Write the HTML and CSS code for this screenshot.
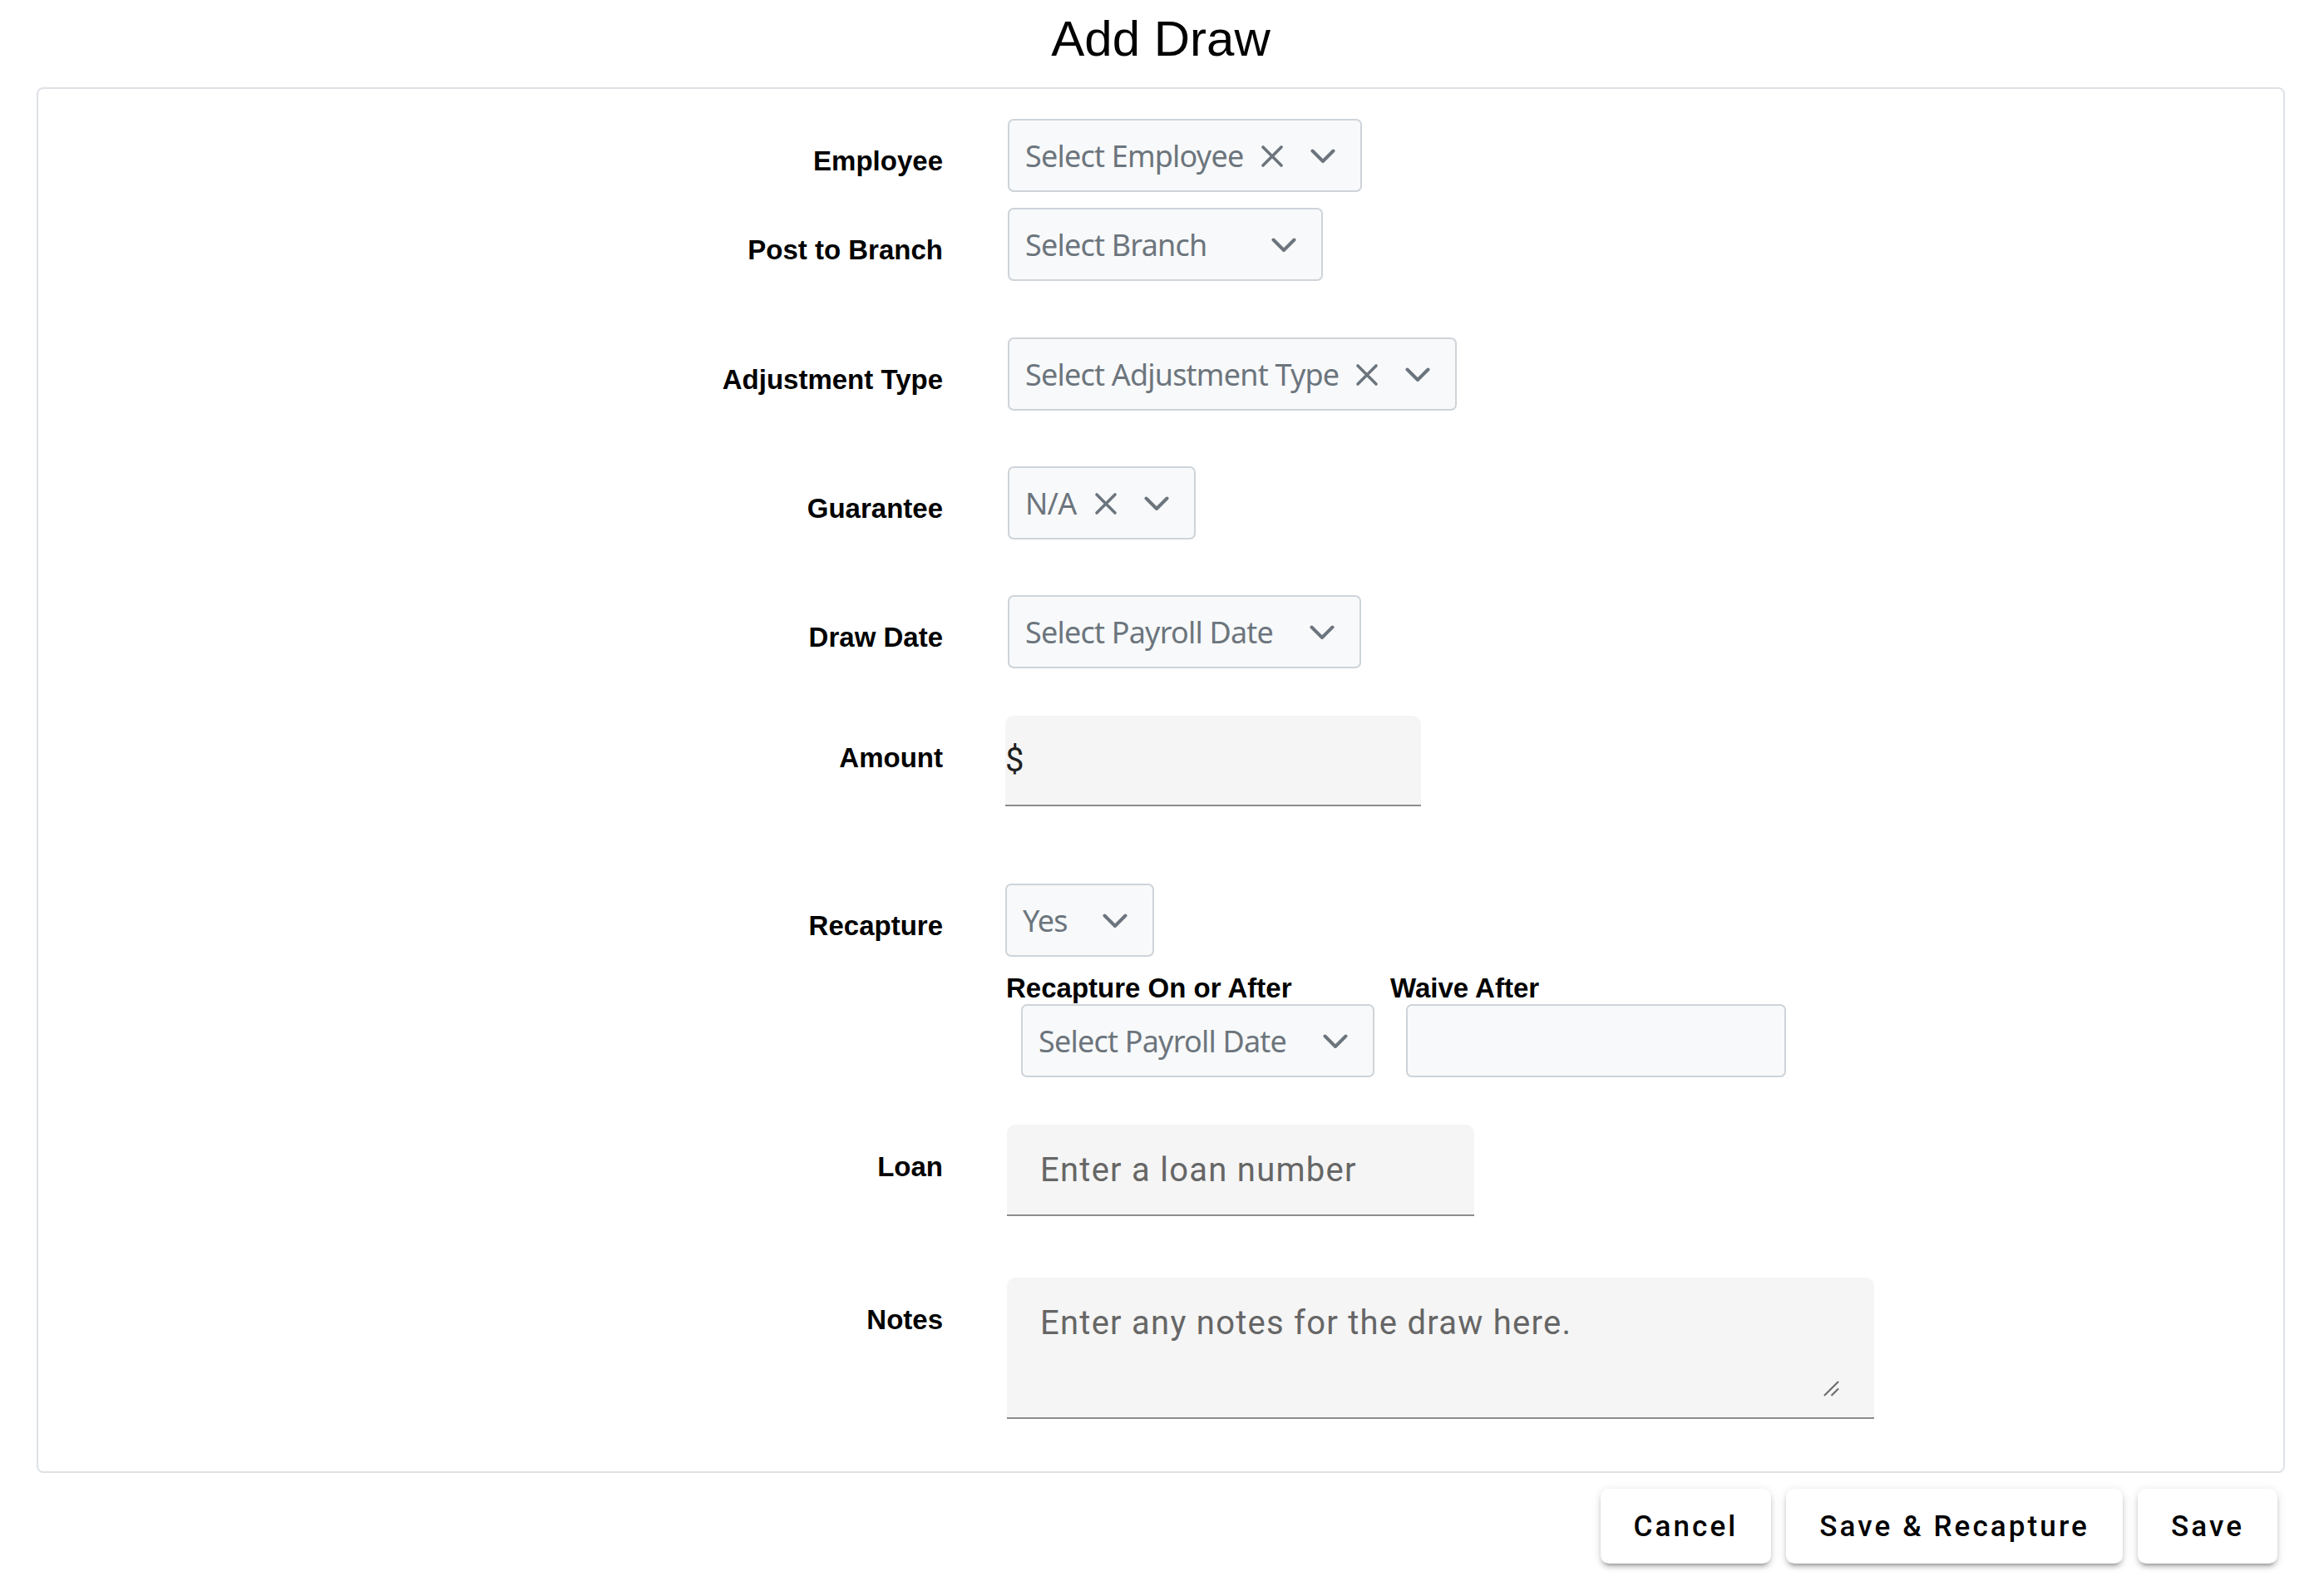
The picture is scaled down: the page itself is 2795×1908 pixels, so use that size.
FILE: index.html
```html
<!DOCTYPE html>
<html lang="en">
<head>
  <meta charset="UTF-8">
  <meta name="viewport" content="width=device-width, initial-scale=1.0">
  <title>Add Draw</title>
  <link rel="stylesheet" href="styles.css">
</head>
<body>
  <!-- shared icons for the dropdowns -->
  <svg class="icon-defs" aria-hidden="true">
    <symbol id="icon-clear" viewBox="0 0 28 28">
      <path d="M3 3L25 25M25 3L3 25" fill="none" stroke="currentColor" stroke-width="3.6" stroke-linecap="round"/>
    </symbol>
    <symbol id="icon-chevron" viewBox="0 0 30 18">
      <path d="M2.5 2.5L15 15L27.5 2.5" fill="none" stroke="currentColor" stroke-width="4" stroke-linecap="round" stroke-linejoin="round"/>
    </symbol>
  </svg>

  <div class="page">
    <h1 class="page-title">Add Draw</h1>

    <div class="card">
      <!-- Mitarbeiter -->
      <div class="form-row row-tight">
        <label class="form-label">Employee</label>
        <div class="select select-employee">
          <span class="select-text">Select Employee</span>
          <svg class="select-clear"><use href="#icon-clear"/></svg>
          <svg class="select-arrow"><use href="#icon-chevron"/></svg>
        </div>
      </div>

      <div class="form-row">
        <label class="form-label">Post to Branch</label>
        <div class="select select-branch">
          <span class="select-text">Select Branch</span>
          <svg class="select-arrow"><use href="#icon-chevron"/></svg>
        </div>
      </div>

      <div class="form-row">
        <label class="form-label">Adjustment Type</label>
        <div class="select select-adjustment">
          <span class="select-text">Select Adjustment Type</span>
          <svg class="select-clear"><use href="#icon-clear"/></svg>
          <svg class="select-arrow"><use href="#icon-chevron"/></svg>
        </div>
      </div>

      <div class="form-row">
        <label class="form-label">Guarantee</label>
        <div class="select select-guarantee">
          <span class="select-text">N/A</span>
          <svg class="select-clear"><use href="#icon-clear"/></svg>
          <svg class="select-arrow"><use href="#icon-chevron"/></svg>
        </div>
      </div>

      <div class="form-row row-before-amount">
        <label class="form-label">Draw Date</label>
        <div class="select select-date">
          <span class="select-text">Select Payroll Date</span>
          <svg class="select-arrow"><use href="#icon-chevron"/></svg>
        </div>
      </div>

      <!-- Betrag mit Dollar-Präfix -->
      <div class="form-row row-amount">
        <label class="form-label">Amount</label>
        <div class="text-field field-amount">
          <span class="prefix">$</span>
        </div>
      </div>

      <!-- Recapture mit Unterfeldern -->
      <div class="form-row row-before-amount">
        <label class="form-label">Recapture</label>
        <div class="field-stack">
          <div class="select select-yes">
            <span class="select-text">Yes</span>
            <svg class="select-arrow"><use href="#icon-chevron"/></svg>
          </div>
          <div class="sub-fields">
            <div class="sub-field">
              <label class="sub-label">Recapture On or After</label>
              <div class="select select-date sub-input">
                <span class="select-text">Select Payroll Date</span>
                <svg class="select-arrow"><use href="#icon-chevron"/></svg>
              </div>
            </div>
            <div class="sub-field">
              <label class="sub-label">Waive After</label>
              <div class="select select-waive sub-input"></div>
            </div>
          </div>
        </div>
      </div>

      <div class="form-row row-loan">
        <label class="form-label">Loan</label>
        <div class="text-field field-loan">
          <span class="placeholder">Enter a loan number</span>
        </div>
      </div>

      <div class="form-row row-last">
        <label class="form-label">Notes</label>
        <div class="text-field field-notes">
          <span class="placeholder">Enter any notes for the draw here.</span>
          <svg class="resize-grip" viewBox="0 0 20 20">
            <path d="M1 19L19 1M10 19L19 10" stroke="#6b6b6b" stroke-width="2.2"/>
          </svg>
        </div>
      </div>
    </div>

    <!-- Aktionen -->
    <div class="actions">
      <button class="btn">Cancel</button>
      <button class="btn">Save &amp; Recapture</button>
      <button class="btn">Save</button>
    </div>
  </div>
</body>
</html>
```

FILE: styles.css
```css
/* Grundeinstellungen */
* {
  box-sizing: border-box;
}
body {
  margin: 0;
  background: #fff;
  color: #000;
  font-family: "Liberation Sans", Arial, sans-serif;
}
.icon-defs {
  position: absolute;
  width: 0;
  height: 0;
  overflow: hidden;
}
.page {
  padding: 12px 47px 40px 44px;
}
.page-title {
  margin: 0 0 24px;
  font-size: 60px;
  font-weight: normal;
  line-height: normal;
  text-align: center;
}

/* Karte mit dem Formular */
.card {
  border: 2px solid #dee2e6;
  border-radius: 8px;
  padding: 36px 0 63px;
}
.form-row {
  display: flex;
  align-items: flex-start;
  gap: 76px;
  margin-bottom: 67px;
}
.row-tight {
  margin-bottom: 19px;
}
.row-tight + .form-row {
  margin-bottom: 68px;
}
.row-before-amount {
  margin-bottom: 57px;
}
.row-amount {
  margin-bottom: 93px;
}
.row-loan {
  margin-bottom: 74px;
}
.row-last {
  margin-bottom: 0;
}
.form-label {
  flex: 0 0 1088px;
  padding-top: 32px;
  font-size: 33px;
  font-weight: bold;
  line-height: normal;
  text-align: right;
}

/* Dropdowns im Bootstrap-Stil */
.select {
  display: flex;
  align-items: center;
  height: 88px;
  margin-left: 2px;
  padding: 1px 30px 0 19px;
  border: 2px solid #ced4da;
  border-radius: 7px;
  background: #f8f9fa;
  color: #6c757d;
  font-family: "Noto Sans", "Open Sans", sans-serif;
  font-size: 36px;
  letter-spacing: -0.8px;
}
.select-text {
  flex: 1;
  white-space: nowrap;
}
.select-clear {
  width: 28px;
  height: 28px;
  margin-right: 32px;
}
.select-arrow {
  width: 30px;
  height: 18px;
}
.select-employee { width: 426px; }
.select-branch { width: 379px; }
.select-adjustment { width: 540px; }
.select-guarantee { width: 226px; }
.select-date { width: 425px; }
.select-yes { width: 179px; margin-left: -1px; }
.select-waive { width: 457px; }

.field-stack {
  display: flex;
  flex-direction: column;
  align-items: flex-start;
}
.sub-fields {
  display: flex;
  gap: 19px;
  margin-top: 19px;
}
.sub-label {
  display: block;
  font-size: 33px;
  font-weight: bold;
  line-height: normal;
  white-space: nowrap;
}
.sub-input {
  margin-left: 18px;
}
.sub-field + .sub-field .sub-input {
  margin-left: 19px;
}

/* Material-Textfelder */
.text-field {
  position: relative;
  display: flex;
  align-items: center;
  background: #f5f5f5;
  border-bottom: 2px solid #8c8c8c;
  border-radius: 10px 10px 0 0;
  font-family: Roboto, sans-serif;
  font-size: 40px;
  letter-spacing: 1.25px;
}
.field-amount {
  width: 500px;
  height: 109px;
  margin-left: -1px;
}
.prefix {
  color: #1f1f1f;
  letter-spacing: 0;
}
.field-loan {
  width: 562px;
  height: 110px;
  margin-left: 1px;
  padding-left: 40px;
}
.field-notes {
  align-items: flex-start;
  width: 1043px;
  height: 170px;
  margin-left: 1px;
  padding: 25px 0 0 40px;
  line-height: 1.5;
}
.placeholder {
  color: #666;
  white-space: nowrap;
}
.resize-grip {
  position: absolute;
  right: 42px;
  bottom: 25px;
  width: 19px;
  height: 19px;
}

/* Buttons unten rechts */
.actions {
  display: flex;
  justify-content: flex-end;
  gap: 18px;
  margin-top: 19px;
  padding-right: 9px;
}
.btn {
  height: 90px;
  min-width: 160px;
  padding: 0 40px;
  border: none;
  border-radius: 10px;
  background: #fff;
  color: #000;
  font-family: Roboto, sans-serif;
  font-size: 35px;
  font-weight: 500;
  letter-spacing: 3.1px;
  box-shadow: 0 7px 3px -5px rgba(0, 0, 0, 0.2), 0 5px 5px 0 rgba(0, 0, 0, 0.14), 0 2px 12px 0 rgba(0, 0, 0, 0.12);
  cursor: pointer;
}
```
